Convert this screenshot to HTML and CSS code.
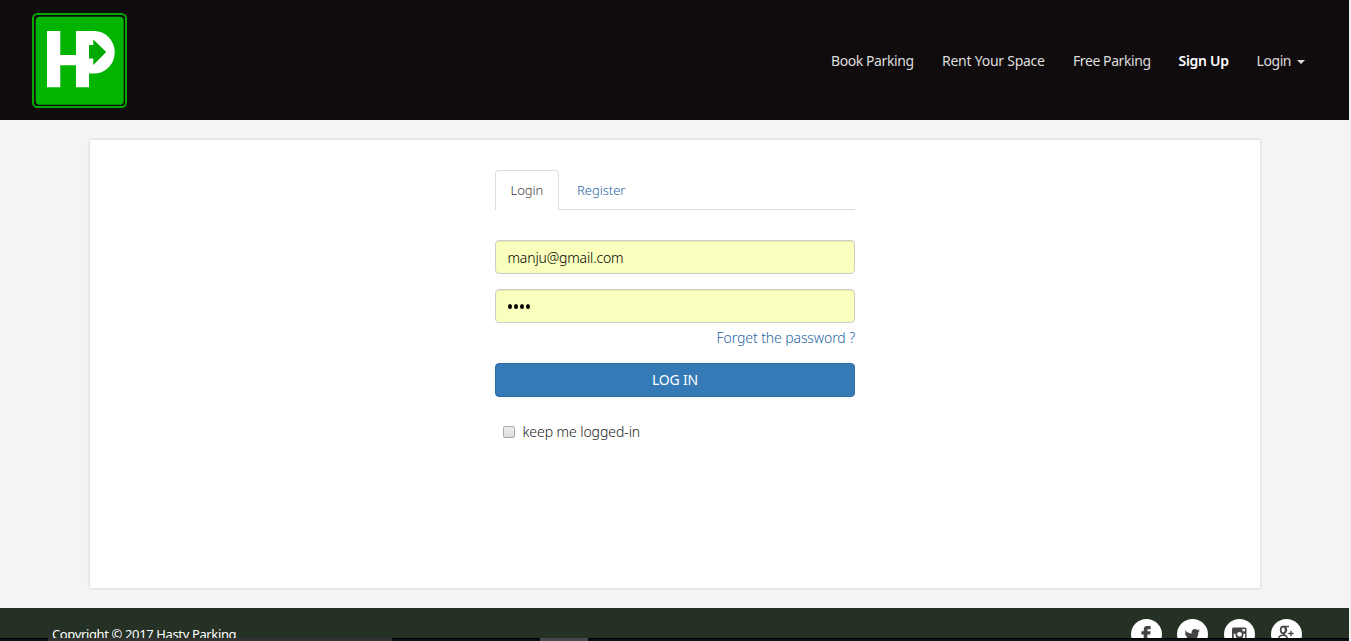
FILE: index.html
```html
<!DOCTYPE html>
<html lang="en">
<head>
<meta charset="utf-8">
<title>Hasty Parking</title>
<link rel="stylesheet" href="styles.css">
</head>
<body>
<div class="page">
  <header class="header">
    <svg class="logo" viewBox="0 0 95 95" aria-label="Hasty Parking">
      <rect x="1" y="1" width="93" height="93" rx="4.5" fill="#100c0d" stroke="#04a904" stroke-width="2"/>
      <rect x="3.7" y="3.7" width="88" height="88" rx="4" fill="#00b400"/>
      <path fill="#fff" d="M15 18h13.300v24H44V18h18.200a20.600 21.300 0 0 1 0 42.600H57v13.700H44V52.300H28.300v22H15z"/>
      <path fill="#00a800" d="M57 32h4.300v-5.600L74.200 39 61.300 52v-6.500H57z"/>
    </svg>
    <nav class="nav">
      <a class="book">Book Parking</a>
      <a class="rent">Rent Your Space</a>
      <a class="free">Free Parking</a>
      <a class="signup">Sign Up</a>
      <a class="login">Login</a>
      <span class="caret"></span>
    </nav>
  </header>
  <main class="card">
    <form class="form">
      <div class="tabs">
        <a class="tab active">Login</a>
        <a class="tab">Register</a>
      </div>
      <div class="field email">manju@gmail.com</div>
      <div class="field password"><i></i><i></i><i></i><i></i></div>
      <a class="forgot"><span>Forget the password ?</span></a>
      <div class="submit">LOG IN</div>
      <label class="keep"><span class="box"></span><span class="keep-text">keep me logged-in</span></label>
    </form>
  </main>
  <footer class="footer">
    <span class="copyright">Copyright © 2017 Hasty Parking</span>
    <div class="social">
      <svg viewBox="0 0 31 31"><circle cx="15.5" cy="15.5" r="15.5" fill="#fff"/><path fill="#444" d="M12.700 24v-8.500H10.400v-3.300h2.300V10.700c0-2.600 1.400-3.700 3.700-3.700h3.200v3.200h-2c-1 0-1.200.3-1.200 1v1h3.200l-.4 3.300h-2.800V24z"/></svg>
      <svg viewBox="0 0 31 31"><circle cx="15.5" cy="15.5" r="15.5" fill="#fff"/><path fill="#444" d="M8.700 11c2 2.200 4.300 3.300 7 3.400-.5-2.600 1-4.500 3.300-4.500 1 0 1.800.4 2.400 1l2.200-.8-1.400 1.800 1.900-.5-1.700 1.800c0 5.600-3.700 9.300-8.600 9.300-2.200 0-3.900-.5-5.300-1.500 1.900.1 3.400-.4 4.700-1.400-1.500-.1-2.500-.9-3-2.200h1.300c-1.600-.5-2.500-1.700-2.500-3.400l1.400.4c-1.500-1.200-1.800-2.800-1.100-4.400z" transform="translate(-1 0)"/></svg>
      <svg viewBox="0 0 31 31"><circle cx="15.5" cy="15.5" r="15.5" fill="#fff"/><rect x="8" y="8.500" width="14.500" height="14.500" rx="1.500" fill="#444"/><path fill="#fff" d="M9.700 14.800h2a4 4 0 1 0 7.600 0h1.800v6.700H9.700zM18.500 10h2.400v2.300h-2.400z"/><circle cx="15.500" cy="15.300" r="2.400" fill="#fff"/></svg>
      <svg viewBox="0 0 31 31"><circle cx="15.5" cy="15.5" r="15.5" fill="#fff"/><g fill="none" stroke="#444"><ellipse cx="12.200" cy="11" rx="2.500" ry="3.300" stroke-width="1.700"/><path stroke-width="1.300" d="M12.200 7.500H18M14 8c2.400 2 2 4.500-.2 5.700-1.500 1-.8 1.700.6 2.600M17.300 14.500h5.400M20 11.800v5.400"/><ellipse cx="12" cy="19" rx="4" ry="2.800" stroke-width="1.500"/></g></svg>
    </div>
  </footer>
  <div class="taskbar"><span class="task wide"></span><span class="task small"></span></div>
</div>
</body>
</html>
```
FILE: styles.css
```css
* { box-sizing: border-box; }
body {
  margin: 0;
  background: #f4f4f4;
  font: 14px/20px "Noto Sans", "Open Sans", sans-serif;
  color: #222;
  white-space: nowrap;
}
.page { position: relative; height: 641px; overflow: hidden; background: #f4f4f4; border-right: 2px solid #f0f0f0; }
.header {
  display: flex;
  justify-content: space-between;
  height: 120px;
  padding: 13px 44px 0 32px;
  background: #100c0d;
}
.logo { width: 95px; height: 95px; }
.nav { display: flex; height: 20px; margin-top: 38px; color: #ddd; letter-spacing: -.42px; }
.nav a { display: block; }
.book { width: 111px; }
.rent { width: 131px; letter-spacing: -.25px; }
.free { width: 105.5px; }
.signup { width: 78px; color: #fff; font-weight: 600; letter-spacing: -.3px; }
.login { width: 40.5px; }
.caret { width: 8px; height: 4px; margin-top: 9px; border: 4px solid transparent; border-top-color: #ddd; border-bottom: 0; }
.card {
  width: 1170px;
  height: 448px;
  margin: 20px 0 0 90px;
  padding-top: 30px;
  background: #fff;
  box-shadow: 0 0 3px rgba(0, 0, 0, .18);
}
.form { display: flex; flex-direction: column; width: 360px; margin: 0 auto; font-weight: 300; }
.tabs { display: flex; height: 40px; margin-bottom: 30px; border-bottom: 1px solid #ddd; font-size: 13px; letter-spacing: -.03px; }
.tab { height: 40px; padding: 10px 18px; color: #1f65a6; }
.tab.active { width: 64px; padding: 9px 14.5px; border: 1px solid #ddd; border-bottom: 0; border-radius: 4px 4px 0 0; background: #fff; color: #3c3c3c; }
.field {
  display: flex;
  height: 34px;
  padding: 7px 12px 5px;
  margin-bottom: 15px;
  border: 1px solid #ccc;
  border-radius: 4px;
  background: #faffbd;
  box-shadow: inset 0 1px 1px rgba(0, 0, 0, .075);
  color: #000;
}
.email { padding-left: 11.5px; letter-spacing: -.15px; }
.password { align-items: center; gap: 2px; margin-bottom: 5px; padding: 6px 12px; }
.password i { width: 4px; height: 5px; border-radius: 50%; background: #000; }
.forgot { height: 20px; margin-bottom: 15px; text-align: right; color: #1f65a6; letter-spacing: -.1px; }
.submit { height: 34px; padding-top: 6px; border: 1px solid #2e6da4; border-radius: 4px; background: #337ab7; color: #fff; font-weight: 400; text-align: center; letter-spacing: -.2px; }
.keep { display: flex; align-items: center; height: 20px; margin: 25px 0 0 8px; letter-spacing: -.07px; }
.box { width: 12px; height: 12px; margin-right: 7.5px; border: 1px solid #aaa; border-radius: 2px; background: linear-gradient(#eee, #ddd); }
.footer { display: flex; justify-content: space-between; height: 53px; margin-top: 20px; padding: 11px 47.5px 0 52px; background: #253125; color: #fff; }
.copyright { padding-top: 5px; font-size: 13px; letter-spacing: -.37px; }
.social { display: flex; gap: 15.6px; }
.social svg { width: 31px; height: 31px; }
.taskbar { position: absolute; left: 0; top: 638px; display: flex; gap: 148px; width: 1351px; height: 3px; padding-left: 48px; border-top: 1px solid #000; background: #081216; }
.task { height: 3px; margin-top: -1px; background: #333; }
.wide { width: 344px; }
.small { width: 48px; background: #45464b; }
```
